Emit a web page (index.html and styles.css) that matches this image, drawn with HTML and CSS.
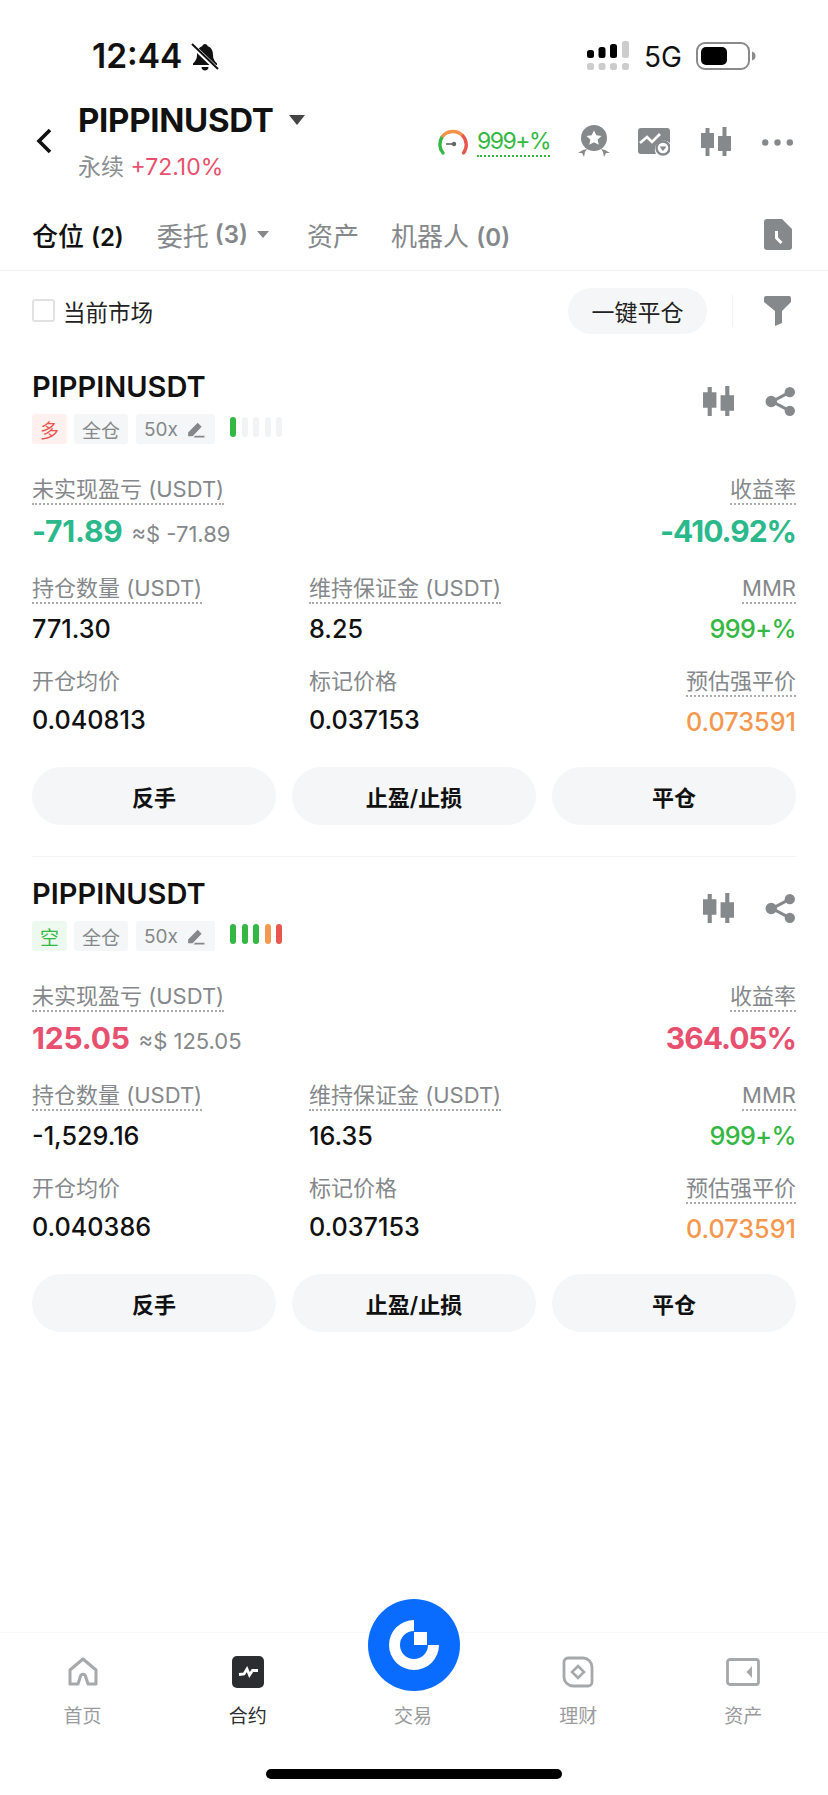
FILE: index.html
```html
<!DOCTYPE html>
<html lang="zh-CN">

<head>
    <meta charset="UTF-8">
    <meta name="viewport" content="width=device-width, initial-scale=1.0">
    <title>PIPPINUSDT</title>
    <link rel="stylesheet" href="styles.css">
</head>

<body>
    <svg class="sprite" xmlns="http://www.w3.org/2000/svg">
        <symbol id="candle" viewBox="0 0 30 30">
            <path d="M4.500 1h4v5H13v15H8.500v8h-4v-8H0V6h4.500zM21.500 0h4v9H30v15h-4.500v5h-4v-5H17V9h4.500z" fill="currentColor" />
        </symbol>
        <symbol id="share" viewBox="0 0 30 30">
            <path d="M24 6 7 15l17 9" fill="none" stroke="currentColor" stroke-width="3" />
            <circle cx="24" cy="6" r="5" fill="currentColor" />
            <circle cx="6" cy="15" r="5.500" fill="currentColor" />
            <circle cx="24" cy="24" r="5" fill="currentColor" />
        </symbol>
        <symbol id="pen" viewBox="0 0 16 16">
            <path d="M1 11 9.500 2.500l3.500 3.500L5 14.500H1zM7 14h8.500v1.500H6z" fill="currentColor" />
        </symbol>
    </svg>

    <div class="status-bar">
        <div class="status-left">
            <span class="clock">12:44</span>
            <svg class="bell" viewBox="0 0 28 28">
                <path d="M14 1c1.500 0 2.500 1 2.800 2.300C20.500 4.500 22 8 22 12c0 4 1.500 6 4 8.500V22H2v-1.500C4.500 18 6 16 6 12c0-4 1.500-7.500 5.200-8.700C11.500 2 12.500 1 14 1zM10.500 24h7c0 2-1.500 3.500-3.500 3.500S10.500 26 10.500 24z" fill="#111" />
                <path d="M1 2 27 27" stroke="#fff" stroke-width="4.500" />
                <path d="M1 1 27 26" stroke="#111" stroke-width="2" />
            </svg>
        </div>
        <div class="status-right">
            <svg class="signal" viewBox="0 0 42 30">
                <rect x="0" y="9" width="7" height="8" rx="2.500" fill="#000" />
                <rect x="11.500" y="6" width="7" height="11" rx="2.500" fill="#000" />
                <rect x="23" y="3" width="7" height="14" rx="2.500" fill="#000" />
                <rect x="35" y="0" width="7" height="17" rx="2.500" fill="#ccc" />
                <rect x="0" y="22" width="7" height="7" rx="2.500" fill="#ccc" />
                <rect x="11.500" y="22" width="7" height="7" rx="2.500" fill="#ccc" />
                <rect x="23" y="22" width="7" height="7" rx="2.500" fill="#ccc" />
                <rect x="35" y="22" width="7" height="7" rx="2.500" fill="#ccc" />
            </svg>
            <span class="net">5G</span>
            <svg class="battery" viewBox="0 0 60 28">
                <rect x="1" y="1" width="52" height="26" rx="8" fill="none" stroke="#8a8a8a" stroke-width="2" />
                <rect x="5" y="5" width="26" height="18" rx="5" fill="#000" />
                <path d="M56 9.500c2.500.5 3.500 2.500 3.500 4.500s-1 4-3.500 4.500z" fill="#8a8a8a" />
            </svg>
        </div>
    </div>

    <header class="top">
        <svg class="back" viewBox="0 0 18 26">
            <path d="M15 2 4 13l11 11" fill="none" stroke="#111" stroke-width="3.600" />
        </svg>
        <div class="symbol">
            <div class="symbol-name">PIPPINUSDT <span class="caret-big"></span></div>
            <div class="symbol-sub">永续 <span class="rose">+72.10%</span></div>
        </div>
        <div class="top-tools">
            <svg class="gauge" viewBox="0 0 32 28">
                <path d="M6 25A13.500 13.500 0 0 1 5 9" fill="none" stroke="#35b843" stroke-width="3.400" stroke-linecap="round" />
                <path d="M5 9A13.500 13.500 0 0 1 26 8" fill="none" stroke="#f5924a" stroke-width="3.400" />
                <path d="M26 8A13.500 13.500 0 0 1 26.500 25" fill="none" stroke="#e8574e" stroke-width="3.400" stroke-linecap="round" />
                <path d="M9 16h6" stroke="#666" stroke-width="1.600" />
                <circle cx="17" cy="16" r="2.200" fill="#666" />
            </svg>
            <span class="mmr-link">999+%</span>
            <svg class="tool medal" viewBox="0 0 34 34">
                <circle cx="17" cy="13" r="13" fill="#86898c" />
                <path d="M17 5.500l2.300 4.800 5.200.7-3.800 3.600 1 5.200-4.700-2.500-4.700 2.500 1-5.200-3.800-3.600 5.200-.7z" fill="#fff" />
                <path d="M1 28l5-3 4-1-2 3-1 5-2-4zM33 28l-5-3-4-1 2 3 1 5 2-4z" fill="#86898c" />
            </svg>
            <svg class="tool chart" viewBox="0 0 32 28">
                <path d="M3 0h26a3 3 0 0 1 3 3v12a9 9 0 0 0-14 11H3a3 3 0 0 1-3-3V3a3 3 0 0 1 3-3z" fill="#86898c" />
                <path d="M2 15l7-6 5 5 8-8" fill="none" stroke="#fff" stroke-width="2.600" />
                <circle cx="25" cy="20" r="6.500" fill="none" stroke="#86898c" stroke-width="2.400" />
                <path d="M21.500 18.500h7L25 23z" fill="#86898c" />
            </svg>
            <svg class="tool candle-big">
                <use href="#candle" />
            </svg>
            <svg class="tool dots" viewBox="0 0 31 7">
                <circle cx="3.200" cy="3.500" r="3.200" fill="#86898c" />
                <circle cx="15.500" cy="3.500" r="3.200" fill="#86898c" />
                <circle cx="27.800" cy="3.500" r="3.200" fill="#86898c" />
            </svg>
        </div>
    </header>

    <nav class="tabs">
        <span class="tab tab-on">仓位 <b>(2)</b></span>
        <span class="tab tab-two">委托 <b>(3)</b><i class="caret-small"></i></span>
        <span class="tab tab-three">资产</span>
        <span class="tab tab-four">机器人 <b>(0)</b></span>
        <svg class="doc" viewBox="0 0 28 31">
            <path d="M3 0h15l10 10v18a3 3 0 0 1-3 3H3a3 3 0 0 1-3-3V3a3 3 0 0 1 3-3z" fill="#86898c" />
            <path d="M12.500 12v7l5 5" fill="none" stroke="#fff" stroke-width="3" />
        </svg>
    </nav>

    <div class="filter-row">
        <span class="check"></span>
        <span class="check-label">当前市场</span>
        <span class="close-all">一键平仓</span>
        <span class="vline"></span>
        <svg class="funnel" viewBox="0 0 27 30">
            <path d="M2 0h23a2 2 0 0 1 2 2v4l-9 9v12l-7 3V15L0 6V2a2 2 0 0 1 2-2z" fill="#86898c" />
        </svg>
    </div>

    <main>
        <article class="card">
            <div class="card-head">
                <div>
                    <h2>PIPPINUSDT</h2>
                    <div class="tags">
                        <span class="tag tag-long">多</span>
                        <span class="tag">全仓</span>
                        <span class="tag tag-lev">50x <svg class="pen"><use href="#pen" /></svg></span>
                        <span class="risk">
                            <i class="g"></i><i class="off"></i><i class="off"></i><i class="off"></i><i class="off"></i>
                        </span>
                    </div>
                </div>
                <div class="card-icons">
                    <svg class="card-icon"><use href="#candle" /></svg>
                    <svg class="card-icon"><use href="#share" /></svg>
                </div>
            </div>
            <div class="pnl-row">
                <div>
                    <span class="lbl dotted">未实现盈亏 (USDT)</span>
                    <div class="pnl teal">-71.89 <small>≈$ -71.89</small></div>
                </div>
                <div class="right">
                    <span class="lbl dotted">收益率</span>
                    <div class="pnl pnl-pct teal">-410.92%</div>
                </div>
            </div>
            <div class="grid">
                <div><span class="lbl dotted">持仓数量 (USDT)</span><div class="val">771.30</div></div>
                <div><span class="lbl dotted">维持保证金 (USDT)</span><div class="val">8.25</div></div>
                <div class="right"><span class="lbl dotted">MMR</span><div class="val val-pct green">999+%</div></div>
                <div><span class="lbl">开仓均价</span><div class="val">0.040813</div></div>
                <div><span class="lbl">标记价格</span><div class="val">0.037153</div></div>
                <div class="right"><span class="lbl dotted">预估强平价</span><div class="val orange">0.073591</div></div>
            </div>
            <div class="actions">
                <span class="btn">反手</span>
                <span class="btn">止盈/止损</span>
                <span class="btn">平仓</span>
            </div>
        </article>

        <article class="card card-last">
            <div class="card-head">
                <div>
                    <h2>PIPPINUSDT</h2>
                    <div class="tags">
                        <span class="tag tag-short">空</span>
                        <span class="tag">全仓</span>
                        <span class="tag tag-lev">50x <svg class="pen"><use href="#pen" /></svg></span>
                        <span class="risk">
                            <i class="g"></i><i class="g"></i><i class="g"></i><i class="o"></i><i class="r"></i>
                        </span>
                    </div>
                </div>
                <div class="card-icons">
                    <svg class="card-icon"><use href="#candle" /></svg>
                    <svg class="card-icon"><use href="#share" /></svg>
                </div>
            </div>
            <div class="pnl-row">
                <div>
                    <span class="lbl dotted">未实现盈亏 (USDT)</span>
                    <div class="pnl rose">125.05 <small>≈$ 125.05</small></div>
                </div>
                <div class="right">
                    <span class="lbl dotted">收益率</span>
                    <div class="pnl pnl-pct rose">364.05%</div>
                </div>
            </div>
            <div class="grid">
                <div><span class="lbl dotted">持仓数量 (USDT)</span><div class="val">-1,529.16</div></div>
                <div><span class="lbl dotted">维持保证金 (USDT)</span><div class="val">16.35</div></div>
                <div class="right"><span class="lbl dotted">MMR</span><div class="val val-pct green">999+%</div></div>
                <div><span class="lbl">开仓均价</span><div class="val">0.040386</div></div>
                <div><span class="lbl">标记价格</span><div class="val">0.037153</div></div>
                <div class="right"><span class="lbl dotted">预估强平价</span><div class="val orange">0.073591</div></div>
            </div>
            <div class="actions">
                <span class="btn">反手</span>
                <span class="btn">止盈/止损</span>
                <span class="btn">平仓</span>
            </div>
        </article>
    </main>

    <footer class="bottom">
        <div class="bottom-nav">
            <div class="nav-item">
                <svg class="nav-icon" viewBox="0 0 32 32">
                    <path d="M3 28V14L16 3l13 11v14h-8l-2.500-8c-.8-2.500-4.200-2.500-5 0L11 28z" fill="none" stroke="#a6a8aa" stroke-width="3" stroke-linejoin="round" />
                </svg>
                <span>首页</span>
            </div>
            <div class="nav-item nav-on">
                <svg class="nav-icon" viewBox="0 0 32 32">
                    <rect width="32" height="32" rx="5" fill="#2b2d30" />
                    <path d="M7 18.500l5-.5 3-5 2.500 6 3-4.500H26" fill="none" stroke="#fff" stroke-width="2.800" />
                </svg>
                <span>合约</span>
            </div>
            <div class="nav-item nav-trade">
                <svg class="trade-logo" viewBox="0 0 92 92">
                    <circle cx="46" cy="46" r="46" fill="#0a6cff" />
                    <path d="M46 21a25 25 0 1 0 25 25H60a14 14 0 1 1-14-14z" fill="#fff" />
                    <path d="M46 33h13v13H46z" fill="#fff" />
                </svg>
                <span>交易</span>
            </div>
            <div class="nav-item">
                <svg class="nav-icon" viewBox="0 0 32 32">
                    <path d="M6 2h15a9 9 0 0 1 9 9v15a4 4 0 0 1-4 4H11a9 9 0 0 1-9-9V6a4 4 0 0 1 4-4z" fill="none" stroke="#a6a8aa" stroke-width="2.800" />
                    <path d="M16 10l6 6-6 6-6-6z" fill="none" stroke="#a6a8aa" stroke-width="2.600" />
                </svg>
                <span>理财</span>
            </div>
            <div class="nav-item">
                <svg class="nav-icon nav-wallet" viewBox="0 0 34 28">
                    <rect x="1.500" y="1.500" width="31" height="25" rx="2.500" fill="none" stroke="#a6a8aa" stroke-width="2.800" />
                    <path d="M26 8l-5.500 6 5.500 6z" fill="#a6a8aa" />
                </svg>
                <span>资产</span>
            </div>
        </div>
        <div class="home-bar"></div>
    </footer>
</body>

</html>
```

FILE: styles.css
```css
* {
    box-sizing: border-box;
}

html,
body {
    margin: 0;
    padding: 0;
}

body {
    width: 828px;
    height: 1795px;
    overflow: hidden;
    display: flex;
    flex-direction: column;
    background-color: #fff;
    color: #111;
    font-family: Inter, "Noto Sans CJK SC", sans-serif;
}

.sprite {
    display: none;
}

.right {
    text-align: right;
}

/* status bar */
.status-bar {
    height: 90px;
    padding: 36px 0 0 92px;
    display: flex;
    justify-content: space-between;
}

.status-left {
    display: flex;
    align-items: flex-start;
    gap: 9px;
}

.clock {
    font-size: 33.500px;
    line-height: 40px;
    font-weight: 600;
}

.bell {
    width: 28px;
    height: 28px;
    margin-top: 7px;
}

.status-right {
    display: flex;
    align-items: flex-start;
    padding-right: 72px;
}

.signal {
    width: 42px;
    height: 30px;
    margin: 5px 15px 0 0;
}

.net {
    font-size: 28px;
    line-height: 40px;
    margin-top: 1px;
    width: 52px;
}

.battery {
    width: 60px;
    height: 28px;
    margin-top: 6px;
}

/* header */
.top {
    height: 108px;
    padding: 0 35px;
    display: flex;
    align-items: center;
}

.back {
    width: 18px;
    height: 26px;
    margin: 0 25px 6px 0;
}

.symbol {
    align-self: flex-start;
    padding-top: 10px;
}

.symbol-name {
    font-size: 33px;
    line-height: 40px;
    font-weight: 700;
    letter-spacing: -0.3px;
    display: flex;
    align-items: center;
    gap: 16px;
}

.caret-big {
    width: 0;
    height: 0;
    border-left: 8px solid transparent;
    border-right: 8px solid transparent;
    border-top: 10px solid #444;
}

.symbol-sub {
    margin-top: 12px;
    font-size: 23px;
    line-height: 30px;
    color: #8b8e91;
}

.top-tools {
    margin-left: auto;
    display: flex;
    align-items: center;
    padding-bottom: 4px;
}

.gauge {
    width: 32px;
    height: 28px;
    margin-right: 8px;
}

.mmr-link {
    font-size: 23px;
    line-height: 28px;
    letter-spacing: -1.5px;
    color: #35b843;
    border-bottom: 2px dotted #35b843;
    margin-right: 27px;
}

.tool {
    color: #86898c;
}

.medal {
    width: 34px;
    height: 34px;
    margin-right: 27px;
}

.chart {
    width: 32px;
    height: 28px;
    margin-right: 31px;
}

.candle-big {
    width: 30px;
    height: 30px;
    margin-right: 31px;
}

.dots {
    width: 31px;
    height: 7px;
}

/* tabs */
.tabs {
    height: 73px;
    padding: 0 36px 0 32px;
    display: flex;
    align-items: center;
    border-bottom: 1px solid #f0f1f2;
    font-size: 26px;
    color: #85888b;
}

.tab b {
    font-family: Inter, sans-serif;
    font-weight: 600;
    font-size: 24px;
}

.tab-on {
    color: #111;
    font-weight: 500;
}

.tab-two {
    margin-left: 33px;
    display: flex;
    align-items: center;
    gap: 6px;
}

.tab-three {
    margin-left: 38px;
}

.tab-four {
    margin-left: 32px;
}

.caret-small {
    margin-left: 3px;
    width: 0;
    height: 0;
    border-left: 6px solid transparent;
    border-right: 6px solid transparent;
    border-top: 7px solid #85888b;
}

.doc {
    width: 28px;
    height: 31px;
    margin-left: auto;
}

/* filter row */
.filter-row {
    height: 79px;
    padding: 0 37px 0 32px;
    display: flex;
    align-items: center;
}

.check {
    width: 23px;
    height: 23px;
    border: 2px solid #dfe1e3;
    border-radius: 3px;
}

.check-label {
    margin-left: 8px;
    font-size: 22.500px;
    color: #222;
}

.close-all {
    margin-left: auto;
    width: 139px;
    height: 46px;
    border-radius: 23px;
    background-color: #f4f6f7;
    display: flex;
    align-items: center;
    justify-content: center;
    font-size: 23px;
    color: #222;
}

.vline {
    width: 1px;
    height: 32px;
    margin: 0 31px 0 25px;
    background-color: #f0f1f2;
}

.funnel {
    width: 27px;
    height: 30px;
}

/* position card */
.card {
    margin: 0 32px;
    height: 507px;
    padding-top: 19px;
    border-bottom: 1px solid #f2f3f4;
}

.card-last {
    border-bottom: 0;
}

.card-head {
    display: flex;
    justify-content: space-between;
}

h2 {
    margin: 0;
    font-size: 29px;
    line-height: 36px;
    font-weight: 600;
    color: #111;
}

.tags {
    margin-top: 9px;
    display: flex;
    align-items: center;
    gap: 7px;
}

.tag {
    height: 30px;
    padding: 0 8px;
    border-radius: 3px;
    background-color: #f4f6f7;
    display: flex;
    align-items: center;
    font-size: 19px;
    color: #85888b;
}

.tag-long {
    color: #e8574e;
    background-color: #fdf0ef;
}

.tag-short {
    color: #35b843;
    background-color: #edf9ef;
}

.tag-lev {
    width: 79px;
    justify-content: space-between;
    padding-right: 10px;
    margin-left: 1px;
}

.pen {
    width: 18px;
    height: 18px;
    color: #85888b;
}

.risk {
    margin-left: 8px;
    display: flex;
    gap: 5.500px;
    margin-top: -4px;
}

.risk i {
    width: 6px;
    height: 20px;
    border-radius: 3px;
}

.risk .g {
    background-color: #35b843;
}

.risk .o {
    background-color: #f5984f;
}

.risk .r {
    background-color: #e8574e;
}

.risk .off {
    background-color: #f2f3f4;
}

.card-icons {
    display: flex;
    gap: 31px;
    padding-top: 17px;
}

.card-icon {
    width: 31px;
    height: 31px;
    color: #86898c;
}

.lbl {
    display: inline-block;
    font-size: 22px;
    line-height: 28px;
    color: #85888b;
}

.dotted {
    border-bottom: 2px dotted #a9abad;
}

.pnl-row {
    margin-top: 31px;
    display: flex;
    justify-content: space-between;
}

.pnl {
    margin-top: 7px;
    font-size: 30px;
    line-height: 38px;
    font-weight: 700;
    letter-spacing: -0.2px;
}

.pnl-pct {
    letter-spacing: -1px;
}

.pnl small {
    margin-left: 2px;
    font-size: 22px;
    font-weight: 400;
    letter-spacing: 0;
    color: #85888b;
}

.grid {
    margin-top: 21px;
    display: grid;
    grid-template-columns: 277px 1fr 1fr;
    row-gap: 22px;
}

.val {
    margin-top: 9px;
    font-size: 25.200px;
    line-height: 32px;
    font-weight: 500;
    color: #111;
}

.val-pct {
    letter-spacing: -0.6px;
}

.actions {
    margin-top: 29px;
    display: grid;
    grid-template-columns: repeat(3, 1fr);
    gap: 16px;
}

.btn {
    height: 58px;
    border-radius: 29px;
    background-color: #f4f6f7;
    display: flex;
    align-items: center;
    justify-content: center;
    font-size: 22px;
    font-weight: 600;
    color: #111;
}

/* colours, after .val and .pnl so they win */
.rose {
    color: #e8506f;
}

.teal {
    color: #2bb98c;
}

.green {
    color: #35b843;
}

.orange {
    color: #f5984f;
}

/* bottom nav */
.bottom {
    margin-top: auto;
    position: relative;
    height: 163px;
    border-top: 1px solid #f6f7f8;
}

.bottom-nav {
    display: grid;
    grid-template-columns: repeat(5, 165.200px);
    padding-left: 0;
}

.nav-item {
    height: 128px;
    padding-top: 23px;
    display: flex;
    flex-direction: column;
    align-items: center;
    font-size: 19px;
    color: #999b9e;
}

.nav-on {
    color: #2b2d30;
}

.nav-icon {
    width: 32px;
    height: 32px;
    margin-bottom: 13px;
}

.nav-wallet {
    width: 34px;
    height: 28px;
    margin: 2px 0 15px;
}

.nav-trade {
    padding-top: 68px;
}

.trade-logo {
    position: absolute;
    left: 368px;
    top: -34px;
    width: 92px;
    height: 92px;
}

.home-bar {
    position: absolute;
    left: 266px;
    bottom: 16px;
    width: 296px;
    height: 10px;
    border-radius: 5px;
    background-color: #000;
}
```
